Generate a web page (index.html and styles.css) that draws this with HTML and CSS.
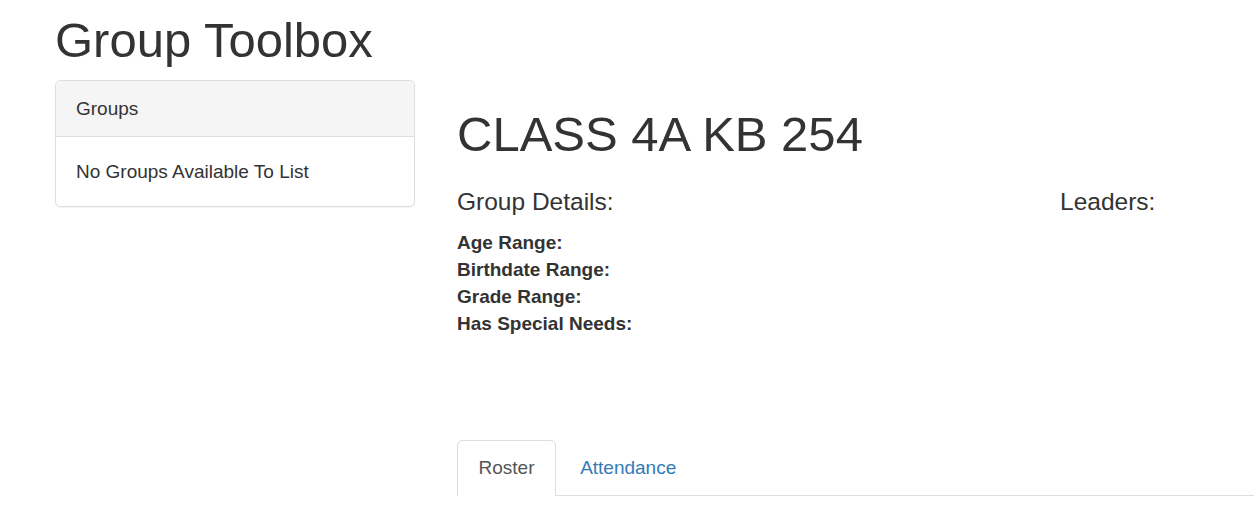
FILE: index.html
```html
<!DOCTYPE html>
<html lang="en">
<head>
    <meta charset="UTF-8">
    <title>Group Toolbox</title>
    <link rel="stylesheet" href="styles.css">
</head>
<body>

<div class="page">
    <h1 class="page-title">Group Toolbox</h1>

    <div class="layout">
        <!-- Group list -->
        <div class="panel">
            <div class="panel-heading">Groups</div>
            <div class="panel-body">No Groups Available To List</div>
        </div>

        <!-- Selected group -->
        <div class="group-main">
            <h1 class="group-name">CLASS 4A KB 254</h1>

            <div class="details-row">
                <div>
                    <h4>Group Details:</h4>
                    <div class="detail"><b>Age Range:</b></div>
                    <div class="detail"><b>Birthdate Range:</b></div>
                    <div class="detail"><b>Grade Range:</b></div>
                    <div class="detail"><b>Has Special Needs:</b></div>
                </div>
                <div>
                    <h4>Leaders:</h4>
                </div>
            </div>

            <ul class="nav-tabs">
                <li class="active"><a href="#">Roster</a></li>
                <li><a href="#">Attendance</a></li>
            </ul>
        </div>
    </div>
</div>

</body>
</html>
```

FILE: styles.css
```css
/* Reset */
body, h1, h4, ul, li {
    margin: 0;
    padding: 0;
}

body {
    font-family: "Liberation Sans", Arial, sans-serif;
    font-size: 19px;
    line-height: 27px;
    color: #333;
    background: #fff;
    overflow: hidden;
}

.page {
    padding: 14px 0 0 55px;
}

h1 {
    font-size: 49px;
    font-weight: normal;
    line-height: 1.1;
}

h4 {
    font-size: 24.5px;
    font-weight: normal;
    line-height: 1.1;
    margin-bottom: 13.33px;
}

.page-title {
    margin-bottom: 12px;
}

.layout {
    display: flex;
    align-items: flex-start;
    gap: 42px;
}

/* Panel */
.panel {
    width: 360px;
    flex: none;
    box-sizing: border-box;
    border: 1px solid #ddd;
    border-radius: 5.33px;
    box-shadow: 0 1px 1px rgba(0, 0, 0, 0.05);
}

.panel-heading {
    padding: 14px 20px;
    background-color: #f5f5f5;
    border-bottom: 1px solid #ddd;
    border-radius: 4.33px 4.33px 0 0;
}

.panel-body {
    padding: 21px 20px;
}

/* Group */
.group-main {
    flex: 1;
}

.group-name {
    margin-top: 28px;
}

.details-row {
    display: grid;
    grid-template-columns: 603px 1fr;
    margin-top: 27px;
}

/* Tabs */
.nav-tabs {
    list-style: none;
    display: flex;
    margin-top: 102.5px;
    border-bottom: 1px solid #ddd;
}

.nav-tabs li {
    margin-bottom: -1px;
}

.nav-tabs a {
    display: block;
    padding: 13.5px 20.5px;
    margin-right: 2.67px;
    border: 1px solid transparent;
    border-radius: 5.33px 5.33px 0 0;
    color: #337ab7;
    text-decoration: none;
}

.nav-tabs li.active a {
    color: #555;
    background-color: #fff;
    border-color: #ddd #ddd transparent;
}
```
